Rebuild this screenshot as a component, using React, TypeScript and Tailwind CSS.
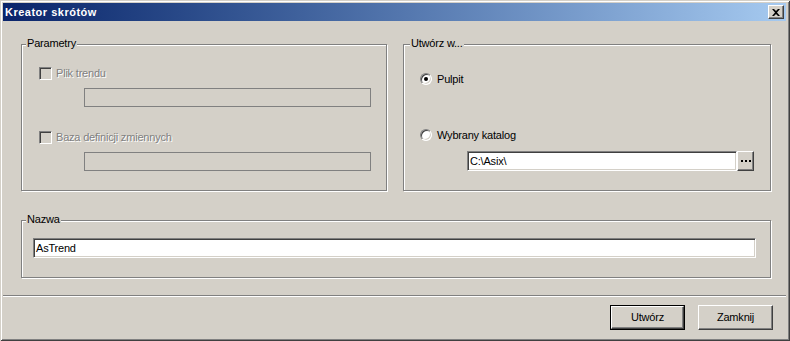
import React from "react";

const sunken =
  "border border-t-[#808080] border-l-[#808080] border-b-white border-r-white shadow-[inset_1px_1px_0_#404040,inset_-1px_-1px_0_#d4d0c8]";
const raised =
  "border border-t-white border-l-white border-b-[#404040] border-r-[#404040] shadow-[inset_-1px_-1px_0_#808080,inset_1px_1px_0_#d4d0c8]";
const etched =
  "relative border border-[#808080] shadow-[1px_1px_0_#fff,inset_1px_1px_0_#fff]";

function GroupLabel({ text, left }: { text: string; left: string }) {
  return (
    <span
      className={`absolute -top-[8px] ${left} bg-[#d4d0c8] px-[1px] text-[11px] leading-[13px] text-black`}
    >
      {text}
    </span>
  );
}

function DisabledCheck({ label }: { label: string }) {
  return (
    <div className="flex items-center gap-[4px] h-[13px]">
      <span className={`block w-[13px] h-[13px] bg-[#d4d0c8] ${sunken}`} />
      <span className="text-[11px] leading-[13px] text-[#808080] [text-shadow:1px_1px_0_#fff]">
        {label}
      </span>
    </div>
  );
}

function Radio({ label, checked }: { label: string; checked?: boolean }) {
  return (
    <div className="flex items-center gap-[5px] h-[12px]">
      <span className="relative block w-[12px] h-[12px] rounded-full bg-white border border-t-[#808080] border-l-[#808080] border-b-white border-r-white shadow-[inset_1px_1px_0_#404040,inset_-1px_-1px_0_#d4d0c8] flex items-center justify-center">
        {checked && <span className="block w-[4px] h-[4px] rounded-full bg-black" />}
      </span>
      <span className="text-[11px] leading-[13px] text-black">{label}</span>
    </div>
  );
}

export default function App() {
  return (
    <div className="w-[790px] h-[341px] bg-[#d4d0c8] flex flex-col pt-[3px] pl-[3px] pr-[4px] pb-[4px] shadow-[inset_1px_1px_0_#d4d0c8,inset_-1px_-1px_0_#404040,inset_2px_2px_0_#fff,inset_-2px_-2px_0_#808080] font-['Liberation_Sans',Arial,sans-serif] tracking-[-0.2px] select-none">
      {/* Title bar */}
      <div className="h-[18px] bg-linear-to-r from-[#0a246a] to-[#a6caf0] flex items-center justify-between pl-[2px] pr-[2px]">
        <span className="text-white font-bold text-[11px] leading-[13px] tracking-[0.5px]">
          Kreator skrótów
        </span>
        <span className={`w-[16px] h-[14px] bg-[#d4d0c8] flex items-center justify-center ${raised}`}>
          <svg width="8" height="7" viewBox="0 0 8 7">
            <path d="M0 0h2l2 2 2-2h2L5 3.5 8 7H6L4 5 2 7H0l3-3.5z" fill="#000" />
          </svg>
        </span>
      </div>

      {/* Body */}
      <div className="flex flex-col flex-1">
        <div className="pl-[18px] pt-[23px]">
          <div className="flex gap-[16px]">
            {/* Parametry */}
            <div className={`${etched} w-[366px] h-[147px]`}>
              <GroupLabel text="Parametry" left="left-[4px]" />
              <div className="pt-[22px] pl-[17px]">
                <DisabledCheck label="Plik trendu" />
              </div>
              <div className="ml-[62px] mt-[8px] w-[287px] h-[19px] border border-[#808080] bg-[#d4d0c8]" />
              <div className="pl-[17px] mt-[24px]">
                <DisabledCheck label="Baza definicji zmiennych" />
              </div>
              <div className="ml-[62px] mt-[8px] w-[287px] h-[19px] border border-[#808080] bg-[#d4d0c8]" />
            </div>

            {/* Utwórz w... */}
            <div className={`${etched} w-[368px] h-[147px]`}>
              <GroupLabel text="Utwórz w..." left="left-[6px]" />
              <div className="pt-[28px] pl-[16px]">
                <Radio label="Pulpit" checked />
              </div>
              <div className="pl-[16px] mt-[44px]">
                <Radio label="Wybrany katalog" />
              </div>
              <div className="ml-[63px] mt-[10px] flex w-[287px] h-[20px]">
                <div className={`flex-1 bg-white ${sunken} flex items-center pl-[2px]`}>
                  <span className="text-[11px] leading-[13px] text-black">C:\Asix\</span>
                </div>
                <div className={`w-[17px] h-[20px] bg-[#d4d0c8] ${raised} flex items-center justify-center gap-[2px]`}>
                  <span className="block w-[2px] h-[2px] bg-black" />
                  <span className="block w-[2px] h-[2px] bg-black" />
                  <span className="block w-[2px] h-[2px] bg-black" />
                </div>
              </div>
            </div>
          </div>

          {/* Nazwa */}
          <div className={`${etched} w-[750px] h-[58px] mt-[29px]`}>
            <GroupLabel text="Nazwa" left="left-[4px]" />
            <div className={`ml-[11px] mt-[17px] w-[723px] h-[20px] bg-white ${sunken} flex items-center pl-[2px]`}>
              <span className="text-[11px] leading-[13px] text-black">AsTrend</span>
            </div>
          </div>
        </div>

        {/* Separator */}
        <div className="mt-[17px] h-[2px] border-t border-t-[#808080] border-b border-b-white" />

        {/* Buttons */}
        <div className="mt-[8px] flex justify-end gap-[13px] pr-[13px]">
          <div className="w-[75px] h-[25px] border border-black">
            <div className={`w-full h-full bg-[#d4d0c8] ${raised} flex items-center justify-center`}>
              <span className="text-[11px] leading-[13px] text-black">Utwórz</span>
            </div>
          </div>
          <div className={`w-[75px] h-[25px] bg-[#d4d0c8] ${raised} flex items-center justify-center`}>
            <span className="text-[11px] leading-[13px] text-black">Zamknij</span>
          </div>
        </div>
      </div>
    </div>
  );
}
